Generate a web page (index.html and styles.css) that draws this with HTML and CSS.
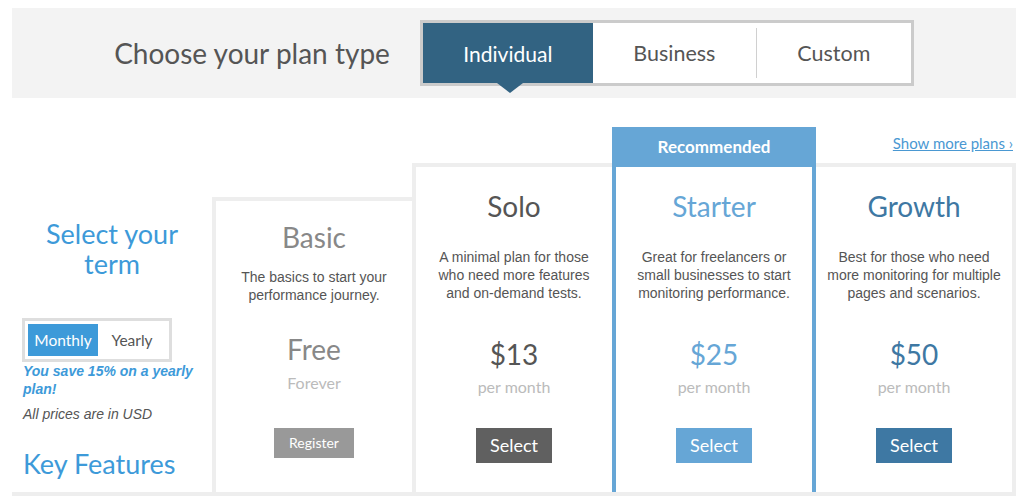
FILE: index.html
```html
<!DOCTYPE html>
<html lang="en">
<head>
<meta charset="utf-8">
<title>Plans</title>
<link rel="stylesheet" href="styles.css">
</head>
<body>
<div class="page">
  <header class="plan-type">
    <h1 class="plan-type__title">Choose your plan type</h1>
    <nav class="tabs">
      <div class="tab tab--active">Individual<span class="tab__arrow"></span></div>
      <div class="tab tab--business">Business</div>
      <div class="tab-sep"></div>
      <div class="tab tab--custom">Custom</div>
    </nav>
  </header>

  <main class="plans">
    <aside class="term">
      <h2 class="term__title">Select your<br>term</h2>
      <div class="toggle">
        <div class="toggle__opt toggle__opt--on">Monthly</div>
        <div class="toggle__opt">Yearly</div>
      </div>
      <p class="term__save">You save 15% on a yearly<br>plan!</p>
      <p class="term__usd">All prices are in USD</p>
      <h2 class="term__features">Key Features</h2>
    </aside>

    <div class="col col--basic">
      <section class="card card--basic">
        <h3 class="card__name">Basic</h3>
        <p class="card__desc">The basics to start your<br>performance journey.</p>
        <div class="card__price">Free</div>
        <div class="card__per">Forever</div>
        <a class="btn btn--register">Register</a>
      </section>
    </div>

    <div class="col col--solo">
      <section class="card card--solo">
        <h3 class="card__name">Solo</h3>
        <p class="card__desc">A minimal plan for those<br>who need more features<br>and on-demand tests.</p>
        <div class="card__price">$13</div>
        <div class="card__per">per month</div>
        <a class="btn btn--solo">Select</a>
      </section>
    </div>

    <div class="col col--starter">
      <section class="card card--starter">
        <div class="card__badge">Recommended</div>
        <div class="card__body">
          <h3 class="card__name">Starter</h3>
          <p class="card__desc">Great for freelancers or<br>small businesses to start<br>monitoring performance.</p>
          <div class="card__price">$25</div>
          <div class="card__per">per month</div>
          <a class="btn btn--starter">Select</a>
        </div>
      </section>
    </div>

    <div class="col col--growth">
      <div class="more"><a class="more__link">Show more plans ›</a></div>
      <section class="card card--growth">
        <h3 class="card__name">Growth</h3>
        <p class="card__desc">Best for those who need<br>more monitoring for multiple<br>pages and scenarios.</p>
        <div class="card__price">$50</div>
        <div class="card__per">per month</div>
        <a class="btn btn--growth">Select</a>
      </section>
    </div>
  </main>
  <div class="rule"></div>
</div>
</body>
</html>
```

FILE: styles.css
```css
* { box-sizing: border-box; }
html, body { margin: 0; padding: 0; background: #fff; }
body { font-family: Lato, "Open Sans", sans-serif; color: #555; overflow: hidden; }
h1, h2, h3, p { margin: 0; font-weight: normal; }

.page { margin-left: 12px; width: 1004px; padding-top: 8px; }

/* header */
.plan-type {
  height: 90px;
  background: #f3f3f3;
  display: flex;
  align-items: center;
  justify-content: center;
  gap: 30px;
}
.plan-type__title { font-size: 28px; color: #555; line-height: 34px; }
.tabs {
  display: flex;
  width: 494px;
  height: 66px;
  border: 3px solid #cbcbcb;
  background: #fff;
  align-items: center;
}
.tab {
  height: 60px;
  display: flex;
  align-items: center;
  justify-content: center;
  font-size: 21.5px;
  color: #555;
}
.tab--active { width: 170px; background: #326382; color: #fff; position: relative; font-size: 21px; }
.tab--business { width: 163px; }
.tab--custom { flex: 1; }
.tab-sep { width: 1px; height: 50px; background: #d0d0d0; }
.tab__arrow {
  position: absolute;
  top: 100%;
  left: 50%;
  margin-left: -11px;
  width: 0; height: 0;
  border-left: 13px solid transparent;
  border-right: 13px solid transparent;
  border-top: 10px solid #326382;
}

/* main */
.plans { display: flex; height: 394px; }

.term { width: 200px; padding-top: 121px; }
.term__title { font-size: 27px; line-height: 30px; color: #3d9ad9; text-align: center; }
.toggle {
  margin: 39px 0 0 10px;
  width: 150px;
  height: 44px;
  border: 3px solid #dedede;
  padding: 3px;
  display: flex;
}
.toggle__opt { flex: 1; display: flex; align-items: center; justify-content: center; font-size: 15.5px; color: #555; }
.toggle__opt--on { flex: 0 0 70px; background: #3d9ad9; color: #fff; }
.term__save {
  padding-left: 11px;
  font: italic bold 14px/18px "Liberation Sans", Arial, sans-serif;
  color: #3d9ad9;
}
.term__usd {
  margin-top: 7px;
  padding-left: 11px;
  font: italic 14px/18px "Liberation Sans", Arial, sans-serif;
  color: #555;
}
.term__features { margin-top: 26px; padding-left: 11px; font-size: 27px; line-height: 30px; color: #3d9ad9; }

.col { width: 204px; display: flex; flex-direction: column; }
.col + .col { margin-left: -4px; }
.col--basic { padding-top: 99px; }
.col--solo { padding-top: 65px; }
.col--starter { padding-top: 29px; position: relative; z-index: 1; }

.card {
  flex: 1;
  border: 4px solid #eee;
  border-bottom: 0;
  background: #fff;
  text-align: center;
  padding-top: 22px;
}
.card__name { font-size: 28px; line-height: 34px; color: #555; }
.card__desc {
  margin-top: 25px;
  font: 14px/18px "Liberation Sans", Arial, sans-serif;
  color: #555;
}
.card__price { margin-top: 35px; font-size: 28px; line-height: 34px; color: #555; }
.card__per { margin-top: 6px; font-size: 16px; line-height: 20px; color: #bbb; }
.btn {
  display: inline-block;
  margin-top: 31px;
  width: 76px;
  height: 35px;
  line-height: 35px;
  font-size: 18px;
  color: #fff;
  text-decoration: none;
}

.card--basic { padding-top: 19px; }
.card--basic .card__name { color: #888; }
.card--basic .card__desc { margin-top: 14px; }
.card--basic .card__price { margin-top: 28px; color: #888; }
.card--basic .card__per { margin-top: 7px; }
.btn--register { margin-top: 35px; width: 80px; height: 30px; line-height: 30px; font-size: 14px; background: #999; }

.btn--solo { background: #606060; }

.card--starter { border-color: #66a6d6; padding-top: 0; display: flex; flex-direction: column; }
.card__badge {
  height: 36px;
  background: #66a6d6;
  color: #fff;
  font-weight: bold;
  font-size: 17px;
  line-height: 32px;
}
.card__body { padding-top: 22px; }
.card--starter .card__name, .card--starter .card__price { color: #66a6d6; }
.btn--starter { background: #66a6d6; }

.more { height: 65px; padding: 35px 3px 0 0; text-align: right; }
.more__link { font-size: 15px; line-height: 20px; color: #4a98d2; text-decoration: underline; }
.card--growth { flex: 1; }
.card--growth .card__name, .card--growth .card__price { color: #3e78a3; }
.btn--growth { background: #3e78a3; }

.rule { height: 4px; background: #eee; }
```
